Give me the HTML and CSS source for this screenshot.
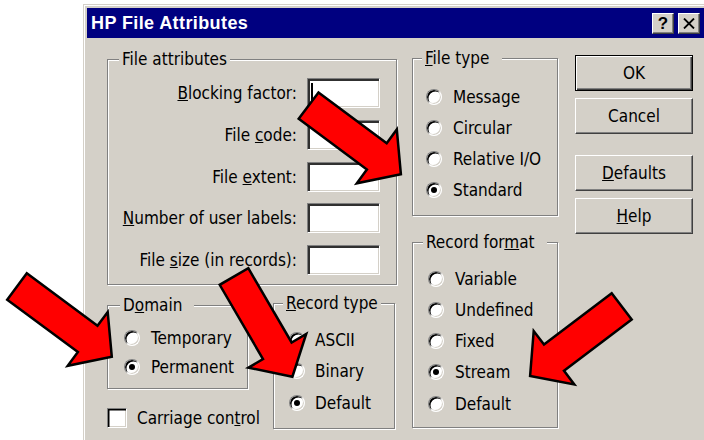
FILE: index.html
```html
<!DOCTYPE html>
<html lang="en">
<head>
<meta charset="utf-8">
<title>HP File Attributes</title>
<link rel="stylesheet" href="styles.css">
</head>
<body>
<div class="dialog">
  <div class="titlebar">
    <span class="title">HP File Attributes</span>
    <span class="caption-btns">
      <span class="cbtn help-q">?</span>
      <span class="cbtn close">
        <svg width="12" height="11" viewBox="0 0 12 11"><path d="M1 0.5 L11 10.5 M11 0.5 L1 10.5" stroke="#000" stroke-width="1.8" fill="none"/></svg>
      </span>
    </span>
  </div>

  <div class="content">
    <div class="col-left">
      <fieldset class="group attrs">
        <legend>File attributes</legend>
        <div class="field"><span class="lbl"><u>B</u>locking factor:</span><span class="input"><span class="caret"></span></span></div>
        <div class="field"><span class="lbl">File <u>c</u>ode:</span><span class="input"></span></div>
        <div class="field"><span class="lbl">File <u>e</u>xtent:</span><span class="input"></span></div>
        <div class="field"><span class="lbl"><u>N</u>umber of user labels:</span><span class="input"></span></div>
        <div class="field"><span class="lbl">File <u>s</u>ize (in records):</span><span class="input"></span></div>
      </fieldset>

      <div class="bottom-row">
        <div class="domain-col">
          <fieldset class="group domain">
            <legend>D<u>o</u>main</legend>
            <div class="opt"><span class="radio"></span>Temporary</div>
            <div class="opt"><span class="radio on"></span>Permanent</div>
          </fieldset>
          <div class="check"><span class="box"></span>Carriage con<u>t</u>rol</div>
        </div>
        <fieldset class="group rtype">
          <legend><u>R</u>ecord type</legend>
          <div class="opt"><span class="radio"></span>ASCII</div>
          <div class="opt"><span class="radio"></span>Binary</div>
          <div class="opt"><span class="radio on"></span>Default</div>
        </fieldset>
      </div>
    </div>

    <div class="col-mid">
      <fieldset class="group ftype">
        <legend><u>F</u>ile type</legend>
        <div class="opt"><span class="radio"></span>Message</div>
        <div class="opt"><span class="radio"></span>Circular</div>
        <div class="opt"><span class="radio"></span>Relative I/O</div>
        <div class="opt"><span class="radio on"></span>Standard</div>
      </fieldset>
      <fieldset class="group rformat">
        <legend>Record for<u>m</u>at</legend>
        <div class="opt"><span class="radio"></span>Variable</div>
        <div class="opt"><span class="radio"></span>Undefined</div>
        <div class="opt"><span class="radio"></span>Fixed</div>
        <div class="opt"><span class="radio on"></span>Stream</div>
        <div class="opt"><span class="radio"></span>Default</div>
      </fieldset>
    </div>

    <div class="col-btns">
      <div class="btn default">OK</div>
      <div class="btn">Cancel</div>
      <div class="btn spaced"><u>D</u>efaults</div>
      <div class="btn"><u>H</u>elp</div>
    </div>
  </div>
</div>

<!-- red callout arrows drawn over the dialog -->
<svg class="callouts" width="704" height="440" viewBox="0 0 704 440">
  <g fill="#ff0000" stroke="#000" stroke-width="2.5" stroke-linejoin="miter">
    <polygon points="318.5,92.4 386.7,143.2 396.8,129.5 400.9,174.3 356.8,183.3 366.9,169.6 298.7,118.8"/>
    <polygon points="26.8,273.3 97.5,325.7 107.7,312.0 111.8,356.8 67.7,365.8 77.9,352.1 7.2,299.7"/>
    <polygon points="248.3,268.2 291.6,342.5 306.2,333.9 292.4,376.7 248.4,367.7 263.0,359.1 219.7,284.8"/>
    <polygon points="631.7,319.4 564.0,370.8 574.3,384.4 530.1,375.9 533.7,331.0 544.0,344.6 611.7,293.2"/>
  </g>
</svg>
</body>
</html>
```

FILE: styles.css
```css
* { box-sizing: border-box; }

html, body {
  margin: 0;
  padding: 0;
  background: #fff;
  overflow: hidden;
}

body {
  position: relative;
  width: 704px;
  height: 440px;
  font-family: "DejaVu Sans Condensed", "Liberation Sans", sans-serif;
  font-size: 17px;
  color: #000;
}

/* window frame; it runs on past the bottom of the view, so no bottom edge */
.dialog {
  margin: 4px 0 0 83px;
  width: 625px;
  height: 436px;
  overflow: hidden;
  background: #d4d0c8;
  border: 1px solid;
  border-bottom: 0;
  border-color: #d4d0c8 #404040 #404040 #d4d0c8;
  box-shadow: inset 1px 1px 0 #fff, inset -1px 0 0 #808080;
  padding: 3px 3px 0 3px;
}

.titlebar {
  height: 30px;
  background: #000080;
  color: #fff;
  display: flex;
  align-items: center;
  justify-content: space-between;
  padding: 0 4px;
}

.title {
  font-family: "Liberation Sans", sans-serif;
  font-weight: bold;
  font-size: 18px;
  letter-spacing: 0.4px;
}

.caption-btns { display: flex; gap: 4px; }

.cbtn {
  width: 22px;
  height: 21px;
  background: #d4d0c8;
  border: 1px solid;
  border-color: #fff #404040 #404040 #fff;
  box-shadow: inset -1px -1px 0 #808080;
  color: #000;
  display: flex;
  align-items: center;
  justify-content: center;
  font-family: "Liberation Sans", sans-serif;
  font-weight: bold;
  font-size: 17px;
  line-height: 1;
}

/* dialog body */
.content {
  display: flex;
  align-items: flex-start;
  padding: 11px 0 0 20px;
}

.col-left { width: 290px; margin-right: 15px; }
.col-mid { width: 146px; margin-right: 17px; margin-top: -1px; }
.col-btns { width: 118px; margin-top: 6px; }

/* etched group box */
.group {
  margin: 0;
  min-width: 0;
  padding: 0;
  border: 1px solid #808080;
  box-shadow: inset 1px 1px 0 #fff, 1px 1px 0 #fff;
}

.group legend {
  margin-left: 10px;
  padding: 0 3px;
  line-height: 20px;
  background: #d4d0c8;
  white-space: nowrap;
}

/* File attributes */
.attrs { padding: 9px 16px 9px 0; }
.attrs legend { margin-left: 11px; }

.field {
  display: flex;
  justify-content: flex-end;
  align-items: center;
  height: 30px;
}
.field + .field { margin-top: 11.75px; }

.lbl { margin-right: 10px; white-space: nowrap; }

.input {
  position: relative;
  width: 73px;
  height: 30px;
  background: #fff;
  border: 1px solid;
  border-color: #808080 #fff #fff #808080;
  box-shadow: inset 2px 2px 0 #303030, inset -1px -1px 0 #d4d0c8;
}

.caret {
  position: absolute;
  left: 3px;
  top: 4px;
  width: 2px;
  height: 20px;
  background: #000;
}

/* radio groups */
.opt {
  display: flex;
  align-items: center;
  white-space: nowrap;
}

.radio {
  position: relative;
  flex: none;
  width: 16px;
  height: 16px;
  margin-right: 11px;
  border-radius: 50%;
  background: #fff;
  border: 1px solid;
  border-color: #808080 #fff #fff #808080;
  box-shadow: inset 1.5px 1.5px 0 #000, inset -1px -1px 0 #d4d0c8;
}

.radio.on::after {
  content: "";
  position: absolute;
  left: 50%;
  top: 50%;
  width: 6px;
  height: 6px;
  margin: -3px 0 0 -3px;
  border-radius: 50%;
  background: #000;
}

.ftype { padding: 13px 0 10px 0; }
.ftype legend { margin-left: 9px; padding-right: 12px; }
.ftype .opt { height: 31px; padding-left: 13px; }

.rformat { margin-top: 16px; padding: 11px 0 8px 0; }
.rformat legend { padding-right: 12px; }
.rformat .opt { height: 31.25px; padding-left: 15px; }

.bottom-row {
  display: flex;
  align-items: flex-start;
  margin-top: 8px;
}

.domain-col { width: 141px; margin-top: 2px; }

.domain { padding: 8px 0 7px 0; }
.domain legend { margin-left: 12px; padding-right: 12px; }
.domain .opt { height: 29px; padding-left: 16px; }

.rtype {
  width: 122px;
  margin-left: 25px;
  padding: 11px 0 9px 0;
}
.rtype legend { margin-left: 9px; }
.rtype .opt { height: 31.5px; padding-left: 15px; }
.rtype .radio { margin-right: 10px; }

.check {
  display: flex;
  align-items: center;
  margin-top: 19px;
  white-space: nowrap;
}

.box {
  flex: none;
  width: 20px;
  height: 20px;
  margin-right: 10px;
  background: #fff;
  border: 1px solid;
  border-color: #808080 #fff #fff #808080;
  box-shadow: inset 1.5px 1.5px 0 #000, inset -1px -1px 0 #d4d0c8;
}

/* push buttons */
.btn {
  display: flex;
  align-items: center;
  justify-content: center;
  height: 36px;
  background: #d4d0c8;
  border: 1px solid;
  border-color: #fff #404040 #404040 #fff;
  box-shadow: inset -1px -1px 0 #808080;
}
.btn + .btn { margin-top: 7px; }
.btn.spaced { margin-top: 21px; }

.btn.default {
  border-color: #000;
  box-shadow: inset 1px 1px 0 #fff, inset -1px -1px 0 #404040, inset -2px -2px 0 #808080;
}

.callouts {
  position: absolute;
  left: 0;
  top: 0;
  pointer-events: none;
}
```
